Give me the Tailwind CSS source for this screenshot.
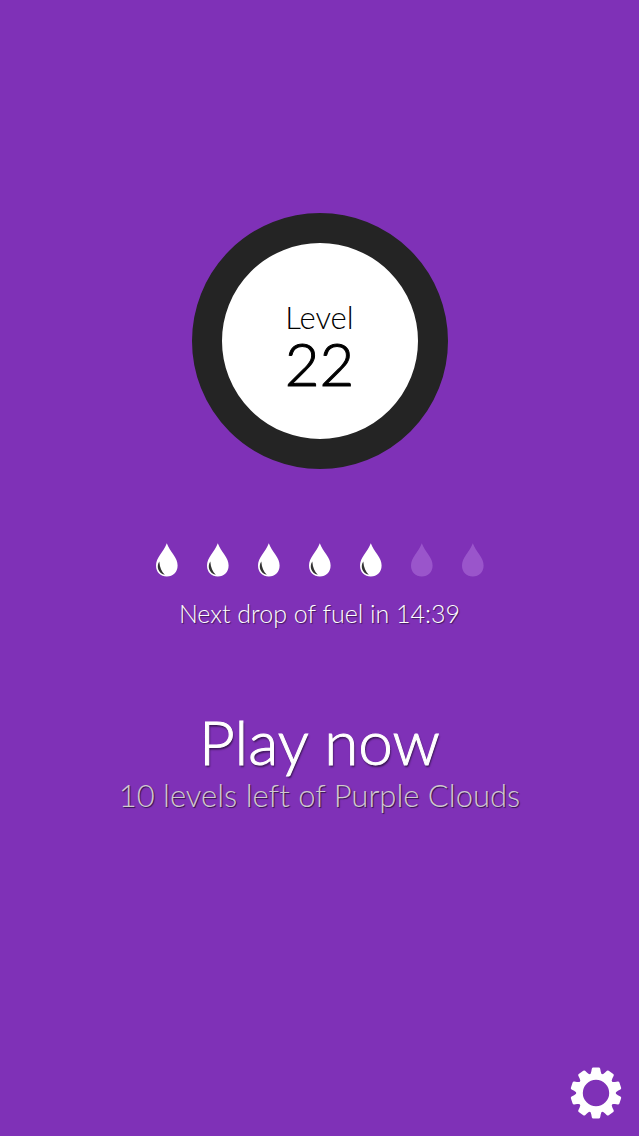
<!DOCTYPE html>
<html lang="en">
<head>
    <meta charset="UTF-8">
    <meta name="viewport" content="width=device-width, initial-scale=1.0">
    <title>Purple Clouds</title>
    <script src="https://cdn.jsdelivr.net/npm/@tailwindcss/browser@4"></script>
</head>
<body class="bg-[#7f31b7] font-['Lato',sans-serif] font-light text-white [font-variant-ligatures:none]">
    <!-- Shared shapes -->
    <svg class="hidden">
        <symbol id="drop" viewBox="0 0 22 34">
            <path fill="currentColor" d="M10.800 .3C12.300 4.500 15 8 17.500 11.800C20 15.500 21.600 18.800 21.600 22.600C21.600 29.300 17 33.500 10.800 33.500S0 29.300 0 22.600C0 18.800 1.600 15.500 4.100 11.800C6.600 8 9.300 4.500 10.800 .3Z"/>
        </symbol>
        <symbol id="drop-full" viewBox="0 0 22 34">
            <use href="#drop"/>
            <path fill="#333" d="M3.300 18.500C.2 23 1.800 30.300 8.800 31.800C5.600 28.500 3.800 24.500 3.300 18.500Z"/>
        </symbol>
    </svg>

    <main class="flex min-h-screen flex-col items-center">
        <!-- Level badge -->
        <section class="mt-[213px] flex size-64 flex-col items-center justify-center rounded-full border-[30px] border-[#242424] bg-white text-black">
            <h1 class="text-center">
                <span class="block pt-3 text-[31px] leading-8">Level</span>
                <span class="block text-6xl leading-15 [-webkit-text-stroke:1px]">22</span>
            </h1>
        </section>

        <!-- Fuel -->
        <section class="mt-[74px] flex flex-col items-center">
            <div class="flex gap-[29px]" role="img" aria-label="5 of 7 drops of fuel">
                <svg class="h-[34px] w-[22px]"><use href="#drop-full"/></svg>
                <svg class="h-[34px] w-[22px]"><use href="#drop-full"/></svg>
                <svg class="h-[34px] w-[22px]"><use href="#drop-full"/></svg>
                <svg class="h-[34px] w-[22px]"><use href="#drop-full"/></svg>
                <svg class="h-[34px] w-[22px]"><use href="#drop-full"/></svg>
                <svg class="h-[34px] w-[22px] text-[#9a55cb]"><use href="#drop"/></svg>
                <svg class="h-[34px] w-[22px] text-[#9a55cb]"><use href="#drop"/></svg>
            </div>
            <p class="mt-5 text-[25px] leading-8 text-shadow-[1px_1px_1px_#00000080]">Next drop of fuel in 14:39</p>
        </section>

        <!-- Play -->
        <button type="button" class="mt-20 flex cursor-pointer flex-col items-center">
            <span class="text-[62px] leading-16 text-shadow-[1px_2px_2px_#00000099] [-webkit-text-stroke:1px]">Play now</span>
            <span class="text-[31px] leading-11 text-[#d0c8d0] text-shadow-[1px_1px_1px_#00000099]">10 levels left of Purple Clouds</span>
        </button>

        <!-- Settings -->
        <footer class="mt-auto flex w-full justify-end px-[17px] pb-[17px]">
            <button type="button" class="cursor-pointer" aria-label="Settings">
                <svg class="size-[52px]" viewBox="-26 -26 52 52">
                    <circle r="16.500" fill="none" stroke="currentColor" stroke-width="6.600"/>
                    <g id="teeth">
                        <path id="cog" fill="currentColor" d="M-6.500 -17.500Q-5.300 -18.800 -4.700 -21.500L-4.200 -24.300Q-3.900 -25.500 -2.800 -25.500H2.800Q3.900 -25.500 4.200 -24.300L4.700 -21.500Q5.300 -18.800 6.500 -17.500Z"/>
                        <use href="#cog" transform="rotate(36)"/>
                        <use href="#cog" transform="rotate(72)"/>
                        <use href="#cog" transform="rotate(108)"/>
                        <use href="#cog" transform="rotate(144)"/>
                    </g>
                    <use href="#teeth" transform="rotate(180)"/>
                </svg>
            </button>
        </footer>
    </main>
</body>
</html>
